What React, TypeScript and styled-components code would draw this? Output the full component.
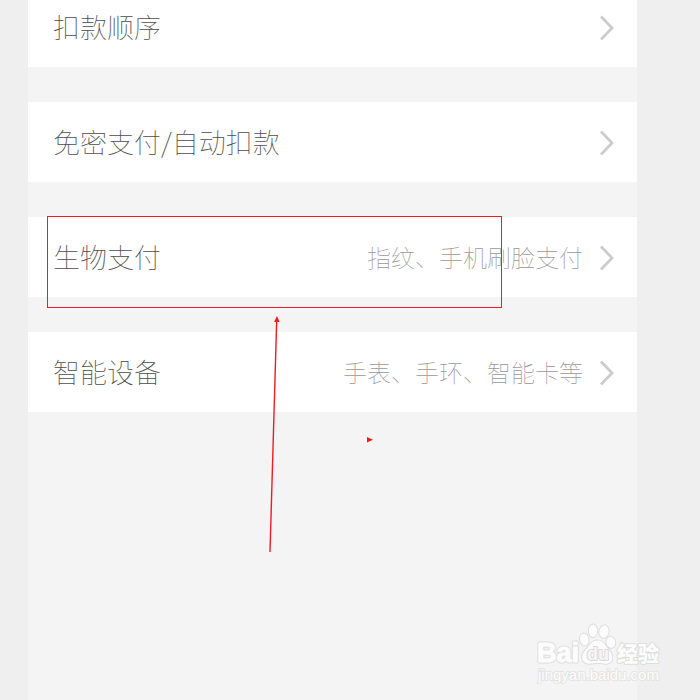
import React from "react";
import styled, { createGlobalStyle } from "styled-components";

const GlobalStyle = createGlobalStyle`
  *, *::before, *::after { box-sizing: border-box; }
  body {
    margin: 0;
    background: #efefef;
    font-family: "Noto Sans CJK SC", "Liberation Sans", sans-serif;
  }
`;

const Page = styled.div`
  position: relative;
  min-height: 100vh;
  padding: 0 63px 0 28px;
  overflow: hidden;
  background: #efefef;
  display: flex;
`;

const Panel = styled.main`
  flex: 1;
  min-width: 0;
  background: #f4f4f4;
`;

const SettingsList = styled.nav`
  display: flex;
  flex-direction: column;
  gap: 35px;
  margin-top: -13px;
`;

const Row = styled.a`
  display: flex;
  align-items: center;
  height: 80px;
  padding: 0 22px 0 25px;
  background: #ffffff;
  color: #4c4c4c;
  text-decoration: none;
  white-space: nowrap;
`;

const Label = styled.span`
  flex: 1;
  font-size: 27px;
  line-height: 40px;
  font-weight: 100;
`;

const Detail = styled.span`
  font-size: 24px;
  line-height: 36px;
  font-weight: 100;
  color: #999999;
`;

const Chevron = styled.svg`
  flex: none;
  width: 16px;
  height: 26px;
  margin-left: 16px;
  fill: none;
  stroke: #cccccc;
  stroke-width: 2.8;
`;

const Highlight = styled.div`
  position: absolute;
  left: 47px;
  top: 216px;
  width: 455px;
  height: 92px;
  border: 1px solid #ed1c24;
  pointer-events: none;
`;

const Arrows = styled.svg`
  position: absolute;
  left: 260px;
  top: 310px;
  width: 120px;
  height: 250px;
  pointer-events: none;
`;

const Watermark = styled.svg`
  position: absolute;
  left: 530px;
  top: 618px;
  width: 140px;
  height: 70px;
  fill: #fcfcfc;
  stroke: #dedede;
  stroke-width: 2;
  stroke-linejoin: round;
  paint-order: stroke;
  font-family: "Liberation Sans", "Noto Sans CJK SC", sans-serif;
`;

const rows = [
  { label: "扣款顺序" },
  { label: "免密支付/自动扣款" },
  { label: "生物支付", detail: "指纹、手机刷脸支付" },
  { label: "智能设备", detail: "手表、手环、智能卡等" },
];

export default function App() {
  return (
    <>
      <GlobalStyle />
      <Page>
        <Panel>
          <SettingsList>
            {rows.map((row) => (
              <Row key={row.label} href="#">
                <Label>{row.label}</Label>
                {row.detail && <Detail>{row.detail}</Detail>}
                <Chevron viewBox="0 0 16 26" aria-hidden="true">
                  <path d="M2 2.5 L13 14 L2 25.5" />
                </Chevron>
              </Row>
            ))}
          </SettingsList>
        </Panel>
        <Highlight />
        <Arrows viewBox="0 0 120 250" aria-hidden="true" fill="#ed1c24">
          <path d="M10 242 L16.7 10" stroke="#ed1c24" strokeWidth="1.4" />
          <path d="M17 6 L19.6 12 L14 12 Z" />
          <path d="M107 127 L113 129.8 L107 132.6 Z" />
        </Arrows>
        <Watermark viewBox="0 0 140 70">
          <g fontSize="27" fontWeight="700">
            <text x="7" y="44" strokeWidth="3">Bai</text>
            <text x="7" y="44" stroke="#fcfcfc" strokeWidth="1">Bai</text>
          </g>
          <ellipse cx="54.3" cy="21.5" rx="4.2" ry="6" transform="rotate(-10 54.3 21.5)" />
          <ellipse cx="63" cy="12.8" rx="4.2" ry="6.2" />
          <ellipse cx="74" cy="13.7" rx="4.6" ry="6.2" transform="rotate(10 74 13.7)" />
          <ellipse cx="80.8" cy="24.3" rx="4.3" ry="5.6" transform="rotate(-10 80.8 24.3)" />
          <path d="M67.5 22.5 C61.5 22.5 60 27.5 56.5 31 C50 37 51 45 58.5 45.8 C62 46 64.5 44.8 67.5 44.8 C71 44.8 74 46.4 77.5 45.5 C84 44 83.5 36.5 78.5 31.5 C75 28 74 22.5 67.5 22.5 Z" />
          <text x="57" y="42" fontSize="18" fontWeight="700" fill="#f6f6f6" stroke="#dadada">
            du
          </text>
          <text x="87" y="43" fontSize="21" fontWeight="900">经验</text>
          <text x="8" y="62" fontSize="15" stroke="#e4e4e4">jingyan.baidu.com</text>
        </Watermark>
      </Page>
    </>
  );
}
